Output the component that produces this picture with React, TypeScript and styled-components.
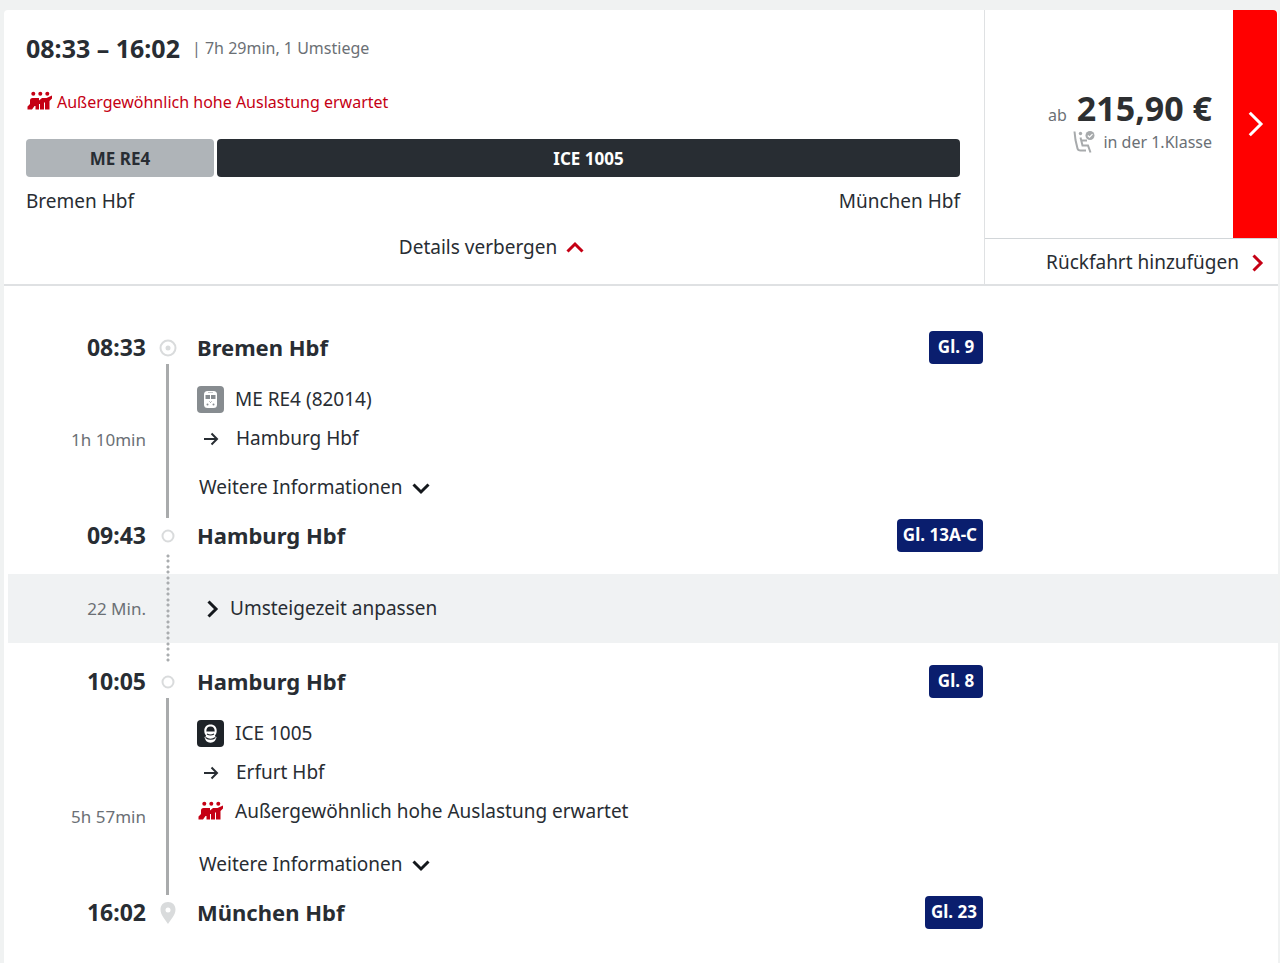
import React from 'react';
import styled, { createGlobalStyle } from 'styled-components';

const ink = '#282d33';
const muted = '#6b7075';
const red = '#c50014';

const GlobalStyle = createGlobalStyle`
  *, *::before, *::after { box-sizing: border-box; }
  body {
    margin: 0;
    background: #f0f2f2;
    color: ${ink};
    font-family: "Noto Sans", "Open Sans", sans-serif;
    font-size: 19px;
    line-height: 27px;
  }
  svg { display: block; flex: none; }
`;

const Card = styled.main`
  margin: 10px 2px 0 4px;
  background: #fff;
  border-radius: 4px 4px 0 0;
`;

const Summary = styled.header`
  display: flex;
  border-bottom: 2px solid #dfe1e3;
`;

const Overview = styled.section`
  flex: 1;
  min-width: 0;
  padding: 22px 24px 23px 22px;
`;

const TimeLine = styled.div`
  display: flex;
  align-items: center;
  gap: 12px;
  height: 32px;
`;

const TimeRange = styled.h2`
  margin: 0;
  font-size: 25px;
  line-height: 32px;
  font-weight: 700;
`;

const Meta = styled.span`
  color: ${muted};
  font-size: 16px;
  font-weight: 400;
  line-height: 24px;
`;

const Warning = styled.p`
  display: flex;
  align-items: center;
  gap: 4px;
  height: 24px;
  margin: 26px 0 25px;
  color: ${red};
  font-size: 16px;
  line-height: 24px;
`;

const Segments = styled.div`
  display: flex;
  gap: 3px;
  height: 38px;
`;

const Segment = styled.div<{ $share: number; $dark?: boolean }>`
  flex: ${(p) => p.$share} 1 0;
  display: flex;
  align-items: center;
  justify-content: center;
  border-radius: 4px;
  background: ${(p) => (p.$dark ? '#282d33' : '#afb4b8')};
  color: ${(p) => (p.$dark ? '#fff' : ink)};
  font-size: 17px;
  font-weight: 700;
`;

const Endpoints = styled.div`
  display: flex;
  justify-content: space-between;
  margin-top: 11px;
`;

const TextButton = styled.button`
  display: flex;
  align-items: center;
  gap: 6px;
  padding: 0;
  border: 0;
  background: none;
  color: ${ink};
  font: inherit;
  cursor: pointer;
`;

const DetailsToggle = styled(TextButton)`
  margin: 19px auto 0;
`;

const Offer = styled.aside`
  display: flex;
  flex-direction: column;
  flex: none;
  width: 294px;
  border-left: 1px solid #dfe1e3;
`;

const OfferTop = styled.div`
  display: flex;
  flex: 1;
`;

const PriceBlock = styled.div`
  display: flex;
  flex: 1;
  flex-direction: column;
  align-items: flex-end;
  justify-content: center;
  padding: 0 21px 8px 0;
`;

const PriceLine = styled.div`
  display: flex;
  align-items: baseline;
  gap: 10px;
`;

const Price = styled.strong`
  font-size: 34px;
  line-height: 44px;
  font-weight: 700;
  color: #2d2f31;
`;

const ClassLine = styled.div`
  display: flex;
  align-items: center;
  gap: 8px;
`;

const SelectButton = styled.button`
  display: flex;
  align-items: center;
  justify-content: center;
  width: 44px;
  margin-right: 1px;
  padding: 0;
  border: 0;
  border-radius: 0 4px 0 0;
  background: #f00;
  cursor: pointer;
`;

const ReturnButton = styled(TextButton)`
  justify-content: flex-end;
  height: 46px;
  padding: 2px 9px 0 0;
  border-top: 1px solid #d2d6d9;
`;

const Timeline = styled.section`
  padding: 45px 0 34px;
`;

const Row = styled.div`
  display: grid;
  grid-template-columns: 142px 44px minmax(0, 1fr);
`;

const Station = styled(Row)`
  align-items: center;
  height: 33px;
  font-size: 23px;
  font-weight: 700;
  line-height: 33px;
`;

const Clock = styled.time`
  text-align: right;
`;

const Marker = styled.span`
  display: flex;
  justify-content: center;
`;

const StationBody = styled.div`
  display: flex;
  align-items: center;
  justify-content: space-between;
  padding: 0 295px 0 7px;
`;

const StationName = styled.h3`
  margin: 0;
  font-size: 22px;
  font-weight: 700;
`;

const Platform = styled.span`
  min-width: 54px;
  height: 33px;
  padding: 0 6px;
  border-radius: 4px;
  background: #0a1e6e;
  color: #fff;
  font-size: 17px;
  line-height: 32px;
  text-align: center;
`;

const Duration = styled.span`
  align-self: end;
  padding-bottom: 67px;
  color: ${muted};
  font-size: 17px;
  line-height: 24px;
  text-align: right;
`;

const TransferTime = styled(Duration)`
  align-self: center;
  padding-bottom: 0;
`;

const Track = styled.span`
  justify-self: center;
  width: 3px;
  margin: 0 1px 1px 0;
  background: #a9abac;
`;

const LegBody = styled.div`
  display: flex;
  flex-direction: column;
  align-items: flex-start;
  gap: 12px;
  padding: 22px 0 18px 7px;
`;

const LegLine = styled.div<{ $last?: boolean }>`
  display: flex;
  align-items: center;
  gap: 11px;
  margin-bottom: ${(p) => (p.$last ? 4 : 0)}px;
`;

const MoreButton = styled(TextButton)`
  margin: 10px 0 0 2px;
`;

const Transfer = styled(Row)`
  align-items: center;
  height: 69px;
  margin: 22px 0;
  background: #f0f2f3;
  box-shadow: inset 4px 0 #fff;
`;

const DottedTrack = styled.span`
  align-self: stretch;
  justify-self: center;
  width: 4px;
  margin: -20px 0;
  background:
    radial-gradient(circle at 2px 2px, #aaadaf 1px, transparent 2px) 0 0 / 4px 11px,
    radial-gradient(circle at 2px 7px, #aaadaf 1px, transparent 2px) 0 0 / 4px 11px;
`;

const TransferButton = styled(TextButton)`
  margin-left: 10px;
`;

type Direction = 'up' | 'down' | 'right';

const chevrons: Record<Direction, string> = {
  up: 'M4.5 15.5 12 8l7.5 7.5',
  down: 'M4.5 8.5 12 16l7.5-7.5',
  right: 'M8.5 4.5 16 12l-7.5 7.5',
};

function Chevron({ to, color = '#14181c', size = 24, weight = 3 }: { to: Direction; color?: string; size?: number; weight?: number }) {
  return (
    <svg width={size} height={size} viewBox="0 0 24 24" fill="none" stroke={color} strokeWidth={weight} aria-hidden="true">
      <path d={chevrons[to]} />
    </svg>
  );
}

function CrowdIcon() {
  return (
    <svg width="27" height="22" viewBox="0 0 27 22" fill={red} aria-hidden="true">
      <circle cx="7.300" cy="2.800" r="2" />
      <circle cx="14.300" cy="2.800" r="2" />
      <circle cx="21.300" cy="2.800" r="2" />
      <path d="M1.500 18.500v-3L4 13V9.500Q4 7 6.500 7H13v2.500L16 7h4.500L26 4.500v3L23.500 10v8.500H19V11l-1 1v6.500h-4V13h-1v5.500H9.500V15H8.500L6 18.500z" />
    </svg>
  );
}

function SeatIcon() {
  return (
    <svg width="22" height="24" viewBox="0 0 22 24" fill="none" stroke="#a7aaac" strokeWidth="2" aria-hidden="true">
      <path d="M1.500 1.500 2.500 10 4.500 18.500Q5 20.500 7.500 20.500H13" />
      <path d="M7.500 7.500 9.500 15.500H15L17.500 22.500M9 10.500H14" />
      <circle cx="7.500" cy="3.500" r="1.700" fill="#a7aaac" stroke="none" />
      <circle cx="17" cy="5.500" r="4.500" fill="#a7aaac" stroke="none" />
      <path d="m14.800 5.500 1.700 1.600 3-3" stroke="#fff" strokeWidth="1.200" />
    </svg>
  );
}

function RegionalTrainIcon() {
  return (
    <svg width="27" height="27" viewBox="0 0 27 27" aria-hidden="true">
      <rect width="27" height="27" rx="4" fill="#878c90" />
      <rect x="7" y="5" width="13" height="17" rx="3.500" fill="#fff" />
      <path d="M8.500 9h4.500v4H8.500zM14 9h4.500v4H14z" fill="#878c90" />
      <path d="M11 6.500h5" stroke="#c4c7c9" />
      <circle cx="10.500" cy="18.500" r="1" fill="#878c90" />
      <circle cx="16.500" cy="18.500" r="1" fill="#878c90" />
      <path d="m12.500 15.500 1 1 1-1" stroke="#878c90" fill="none" />
    </svg>
  );
}

function IceTrainIcon() {
  return (
    <svg width="27" height="27" viewBox="0 0 27 27" aria-hidden="true">
      <rect width="27" height="27" rx="4" fill="#1e2328" />
      <path d="M13.500 4.500c4 0 6.200 2.600 6.200 6.300 0 2.200-.6 3.700-1.700 4.700v1l1.500.5c-.6 3.500-2.700 5.700-6 5.700s-5.400-2.200-6-5.700l1.500-.5v-1c-1.100-1-1.700-2.500-1.700-4.700 0-3.700 2.200-6.300 6.200-6.300z" fill="#fff" />
      <path d="M9.300 11.500c0-3.200 1.400-5 4.200-5s4.200 1.800 4.200 5z" fill="#1e2328" />
      <path d="M10 14q3.500 2 7 0M8.500 17.500q5 3.500 10 0" fill="none" stroke="#1e2328" strokeWidth="1.200" />
    </svg>
  );
}

function ArrowIcon() {
  return (
    <svg width="28" height="24" viewBox="0 0 28 24" fill="none" stroke={ink} strokeWidth="2" aria-hidden="true">
      <path d="M7 12h13M14.500 6.500 20 12l-5.500 5.500" />
    </svg>
  );
}

type StopKind = 'start' | 'stop' | 'end';

function StopIcon({ kind }: { kind: StopKind }) {
  if (kind === 'end') {
    return (
      <svg width="18" height="24" viewBox="0 0 18 24" aria-hidden="true">
        <path d="M9 1c4.500 0 7.500 3 7.500 7.500C16.500 14 12 18 9 23 6 18 1.500 14 1.500 8.500 1.500 4 4.500 1 9 1z" fill="#d9dbdc" />
        <circle cx="9" cy="9" r="2.500" fill="#fff" />
      </svg>
    );
  }
  const r = kind === 'start' ? 7.5 : 5.5;
  return (
    <svg width="18" height="18" viewBox="0 0 18 18" fill="none" stroke="#d9dbdc" strokeWidth="2" aria-hidden="true">
      <circle cx="9" cy="9" r={r} />
      {kind === 'start' && <circle cx="9" cy="9" r="2.500" fill="#d9dbdc" stroke="none" />}
    </svg>
  );
}

function Stop({ time, name, platform, kind = 'stop' }: { time: string; name: string; platform: string; kind?: StopKind }) {
  return (
    <Station>
      <Clock>{time}</Clock>
      <Marker><StopIcon kind={kind} /></Marker>
      <StationBody>
        <StationName>{name}</StationName>
        <Platform>{platform}</Platform>
      </StationBody>
    </Station>
  );
}

function Leg({ duration, icon, train, direction, notice }: { duration: string; icon: React.ReactNode; train: string; direction: string; notice?: string }) {
  return (
    <Row>
      <Duration>{duration}</Duration>
      <Track />
      <LegBody>
        <LegLine>{icon}{train}</LegLine>
        <LegLine><ArrowIcon />{direction}</LegLine>
        {notice && <LegLine $last><CrowdIcon />{notice}</LegLine>}
        <MoreButton type="button">Weitere Informationen<Chevron to="down" /></MoreButton>
      </LegBody>
    </Row>
  );
}

export default function App() {
  return (
    <>
      <GlobalStyle />
      <Card>
        <Summary>
          <Overview>
            <TimeLine>
              <TimeRange>08:33 – 16:02</TimeRange>
              <Meta>| 7h 29min, 1 Umstiege</Meta>
            </TimeLine>
            <Warning><CrowdIcon />Außergewöhnlich hohe Auslastung erwartet</Warning>
            <Segments>
              <Segment $share={20}>ME RE4</Segment>
              <Segment $share={79} $dark>ICE 1005</Segment>
            </Segments>
            <Endpoints>
              <span>Bremen Hbf</span>
              <span>München Hbf</span>
            </Endpoints>
            <DetailsToggle type="button">Details verbergen<Chevron to="up" color={red} /></DetailsToggle>
          </Overview>
          <Offer>
            <OfferTop>
              <PriceBlock>
                <PriceLine><Meta>ab</Meta><Price>215,90 €</Price></PriceLine>
                <ClassLine><SeatIcon /><Meta>in der 1.Klasse</Meta></ClassLine>
              </PriceBlock>
              <SelectButton type="button" aria-label="Weiter">
                <Chevron to="right" color="#fff" size={36} weight={2} />
              </SelectButton>
            </OfferTop>
            <ReturnButton type="button">Rückfahrt hinzufügen<Chevron to="right" color={red} /></ReturnButton>
          </Offer>
        </Summary>
        <Timeline>
          <Stop time="08:33" name="Bremen Hbf" platform="Gl. 9" kind="start" />
          <Leg duration="1h 10min" icon={<RegionalTrainIcon />} train="ME RE4 (82014)" direction="Hamburg Hbf" />
          <Stop time="09:43" name="Hamburg Hbf" platform="Gl. 13A-C" />
          <Transfer>
            <TransferTime>22 Min.</TransferTime>
            <DottedTrack />
            <TransferButton type="button"><Chevron to="right" />Umsteigezeit anpassen</TransferButton>
          </Transfer>
          <Stop time="10:05" name="Hamburg Hbf" platform="Gl. 8" />
          <Leg duration="5h 57min" icon={<IceTrainIcon />} train="ICE 1005" direction="Erfurt Hbf" notice="Außergewöhnlich hohe Auslastung erwartet" />
          <Stop time="16:02" name="München Hbf" platform="Gl. 23" kind="end" />
        </Timeline>
      </Card>
    </>
  );
}
